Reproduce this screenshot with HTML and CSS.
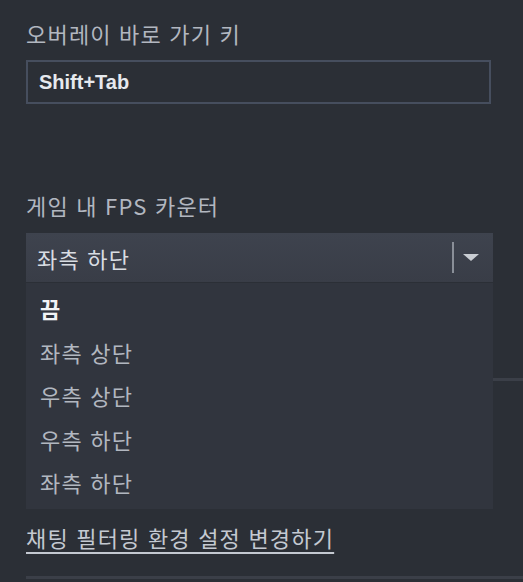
FILE: index.html
```html
<!DOCTYPE html>
<html lang="ko">
<head>
<meta charset="utf-8">
<link rel="stylesheet" href="styles.css">
</head>
<body>
<div class="page">
  <section class="field">
    <div class="label">오버레이 바로 가기 키</div>
    <div class="input">Shift+Tab</div>
  </section>
  <section class="field fps">
    <div class="label">게임 내 FPS 카운터</div>
    <div class="select">
      <div class="select-head">
        <span class="select-value">좌측 하단</span>
        <span class="select-sep"></span>
        <span class="select-arrow"></span>
      </div>
      <ul class="options">
        <li class="option selected">끔</li>
        <li class="option">좌측 상단</li>
        <li class="option">우측 상단</li>
        <li class="option">우측 하단</li>
        <li class="option">좌측 하단</li>
      </ul>
    </div>
  </section>
  <div class="rule rule-mid"></div>
  <div class="link-row"><a class="link" href="#">채팅 필터링 환경 설정 변경하기</a></div>
  <div class="rule rule-bottom"></div>
</div>
</body>
</html>
```
FILE: styles.css
```css
html, body {
  margin: 0;
  padding: 0;
  background: #2b2f36;
  width: 523px;
  height: 582px;
  overflow: hidden;
}
.page {
  font-family: "Noto Sans CJK KR", "Noto Sans", sans-serif;
  color: #b2b7c0;
  padding: 18px 0 0 26px;
}
.label {
  font-size: 22px;
  line-height: 30px;
  letter-spacing: 1.2px;
}
.input {
  margin-top: 12px;
  height: 40px;
  border: 2px solid #464e5e;
  box-sizing: content-box;
  color: #e6e9ee;
  font-family: "Liberation Sans", "Noto Sans CJK KR", sans-serif;
  font-weight: bold;
  font-size: 20px;
  line-height: 40px;
  padding-left: 11px;
  width: 450px;
}
.fps {
  margin-top: 86px;
}
.select {
  position: relative;
  margin-top: 13px;
  width: 467px;
}
.select-head {
  height: 49px;
  background: linear-gradient(#3e434e, #393d47);
  display: flex;
  align-items: center;
  padding-left: 11px;
  color: #d9dde3;
  font-size: 22px;
}
.select-value {
  flex: 1;
  letter-spacing: 1.2px;
}
.select-sep {
  width: 2px;
  height: 31px;
  background: #8a8f98;
}
.select-arrow {
  width: 0;
  height: 0;
  margin: 0 14px 0 9px;
  border-left: 8px solid transparent;
  border-right: 8px solid transparent;
  border-top: 7px solid #c9cdd3;
}
.options {
  position: absolute;
  z-index: 2;
  left: 0;
  top: 50px;
  width: 467px;
  margin: 0;
  padding: 4px 0 6px 0;
  box-sizing: border-box;
  height: 226px;
  list-style: none;
  background: #31353e;
}
.option {
  height: 43.5px;
  line-height: 43.5px;
  padding-left: 14px;
  font-size: 22px;
  letter-spacing: 1.2px;
  color: #b2b7c0;
}
.option.selected {
  color: #f1f3f6;
  font-weight: bold;
}
.rule {
  height: 3px;
  background: #3b3f48;
}
.rule-mid {
  margin-top: 96px;
}
.link-row {
  margin-top: 140px;
}
.link {
  color: #c4c9d1;
  font-size: 22px;
  letter-spacing: 1.2px;
  text-decoration: underline;
  text-decoration-thickness: 2px;
  text-underline-offset: 5px;
}
.rule-bottom {
  margin-top: 23px;
}
```
